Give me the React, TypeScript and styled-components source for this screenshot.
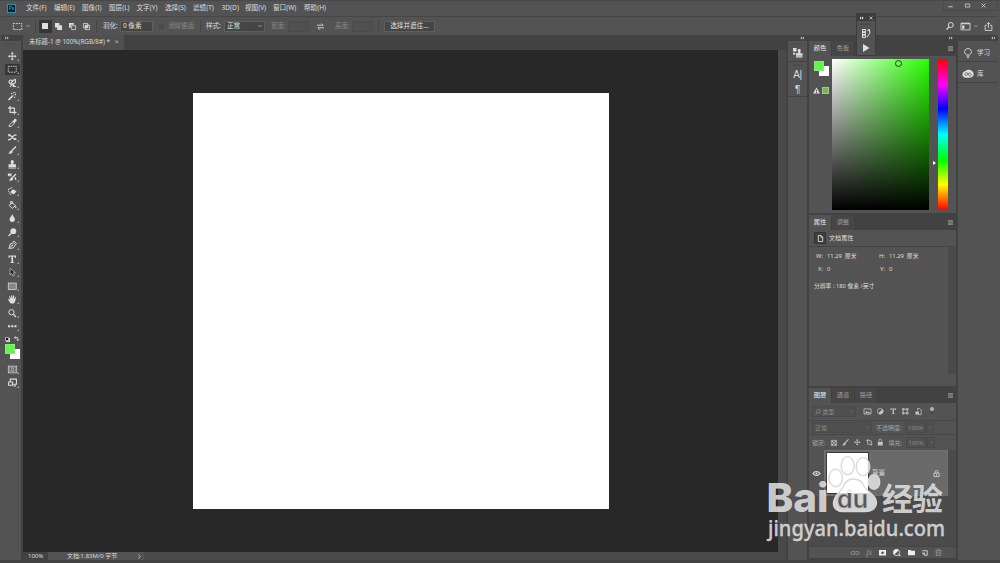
import React from 'react';
import styled, { createGlobalStyle } from 'styled-components';

const GlobalStyle = createGlobalStyle`
  *, *::before, *::after {
    box-sizing: border-box;
  }
  body {
    margin: 0;
    background: #535353;
    overflow: hidden;
    font-family: "Noto Sans", "Noto Sans CJK SC", sans-serif;
    font-size: 6.6px;
    line-height: 10px;
    color: #dedede;
    white-space: nowrap;
  }
  svg {
    display: block;
    flex: none;
    overflow: visible;
  }
`;

const s = { fill: 'none', stroke: 'currentColor', strokeWidth: 1.8 };
const f = { fill: 'currentColor' };

const icons: Record<string, React.ReactNode> = {
  move: <><path {...s} d="M8 2v12M2 8h12" /><path {...f} d="M8 0l3 3.500H5zM8 16l-3-3.500h6zM0 8l3.500-3v6zM16 8l-3.500 3V5z" /></>,
  marquee: <rect {...s} strokeWidth={1.6} strokeDasharray="3 1.6" x="0.500" y="2.500" width="15" height="11" />,
  lasso: <><path {...s} strokeWidth={2} d="M4 9C-1 5 4 0 8 3l6-2v6l-5 3-3-4 4-2M3 8l4 3-3 4" /><path {...f} d="M8 8l8 7H9z" /></>,
  wand: <><path {...s} strokeWidth={3} d="M1 15L9 7" /><path {...s} strokeWidth={2.2} d="M10 6l1-1M11 0v2M15 5h-2M14 1l-1 1M6 2l2 2M12 9l1 2" /></>,
  crop: <path {...s} strokeWidth={2.2} d="M4 0v12h12M0 4h12v12" />,
  dropper: <><path {...s} d="M2 14l1-3 6-6 3 3-6 6z" /><path {...f} d="M8 4l2-1 2-3c3-1 5 1 4 4l-3 2-1 2z" /></>,
  patch: <path {...s} strokeWidth={2.6} d="M0 3l4 1 8 8h4M0 13l4-1 8-8h4M1 6l3-2M12 12l3-2" />,
  brush: <><path {...s} strokeWidth={2.6} d="M15 1L7 9" /><path {...f} d="M6 8l3 3c-1 4-5 4-8 4 2-2 1-5 5-7z" /></>,
  stamp: <path {...f} d="M5 3a3 3 0 0 1 6 0c0 2-1 3-1 5h5v5H1V8h5c0-2-1-3-1-5zM1 14h14v2H1z" />,
  history: <><path {...s} strokeWidth={2.4} d="M15 2L8 9M1 6V2h6M2 2l4 4M13 8l2 5" /><path {...f} d="M7 8l3 3c-1 4-5 4-8 4 2-2 1-5 5-7z" /></>,
  eraser: <><path {...f} d="M9 4l7 4-5 6-7-4z" /><path {...s} strokeWidth={2} strokeDasharray="2 1.500" d="M1 9V4l7-3M2 11l5 4" /></>,
  bucket: <><path {...s} d="M2 8l6-5 6 6-6 5zM5 6V1h3v5" /><path {...f} d="M14 8c3 4 2 6 1 6s-2-2-1-6z" /></>,
  drop: <path {...f} d="M8 0c1 4 5 6 5 10a5 5 0 0 1-10 0c0-4 4-6 5-10z" />,
  dodge: <><circle {...f} cx="10" cy="6" r="5.500" /><path {...s} strokeWidth={2.2} d="M7 9l-6 6" /></>,
  pen: <><path {...s} d="M2 14L4 6l6-3 4 4-4 6zM2 14l6-6M9 2l2-2 5 5-2 2" /><circle {...f} cx="8" cy="8" r="1.500" /></>,
  type: <path {...f} d="M1 1h14v4h-2L12 3H9.500v10l2 1v1h-7v-1l2-1V3H4L3 5H1z" />,
  arrow: <path fill="#171717" stroke="currentColor" strokeWidth="1.200" d="M4 1v12l3-3 2 5 3-1-2-5h4z" />,
  rect: <rect x="0.500" y="2" width="15" height="12" fill="#858585" stroke="currentColor" strokeWidth="1.400" />,
  hand: <path {...f} d="M5 16C3 13 1 10 0 8c1-1 2-1 4 1L2 3c1-1 2-1 2 0l2 4V1c1-1 2-1 2 0v6l2-6c1-1 2 0 2 1l-1 6 3-4c1 0 2 0 1 2-1 4-2 8-4 10z" />,
  zoom: <><circle {...s} cx="6.500" cy="6" r="5" /><path {...s} strokeWidth={2.4} d="M10 10l5 5" /></>,
  search: <><circle {...s} strokeWidth={2} cx="9.500" cy="6" r="5" /><path {...s} strokeWidth={2.2} d="M6 10l-5 5" /></>,
  more: <path {...f} d="M0 6h4v4H0zM6 6h4v4H6zM12 6h4v4h-4z" />,
  mask: <><rect {...s} strokeWidth={1.3} x="0.500" y="2" width="15" height="12" /><rect {...s} strokeWidth={1.3} strokeDasharray="1.500 1" x="3" y="4" width="10" height="8" /><circle {...s} strokeWidth={1.3} cx="8" cy="8" r="2.500" /></>,
  screen: <><path {...s} d="M4 9V2h11v9H9" /><path {...s} fill="#535353" d="M1 7h7v6H1zM10 14h4" /></>,
  chevron: <path {...s} strokeWidth={2.4} d="M2 5l6 6 6-6" />,
  next: <path {...s} strokeWidth={2} d="M5 1l5 7-5 7" />,
  collapse: <path {...f} d="M8 2v12L1 8zM16 2v12L9 8z" />,
  expand: <path {...f} d="M0 2v12l7-6zM8 2v12l7-6z" />,
  close: <path {...s} strokeWidth={2.8} d="M2 2l12 12M14 2L2 14" />,
  minimize: <path {...s} strokeWidth={3} d="M1 12h14" />,
  maximize: <path {...s} strokeWidth={2.6} d="M1 3h14v10H1z" />,
  swap: <path {...s} strokeWidth={2} d="M0 5h14l-4-4M16 11H2l4 4" />,
  switch: <path {...s} strokeWidth={2.6} d="M5 1L1 5l4 3M1 5h11v10M8 11l4 4 4-4" />,
  square: <path {...f} d="M2 2h12v12H2z" />,
  union: <path {...f} d="M0 0h10v5h6v11H5v-6H0z" />,
  subtract: <><path {...f} d="M0 0h11v4H4v7H0z" /><path {...s} d="M6 6h9v9H6z" /></>,
  intersect: <><path {...s} d="M1 1h10v10H1zM5 5h10v10H5z" /><path {...f} d="M5 5h6v6H5z" /></>,
  workspace: <><path {...s} strokeWidth={1.5} d="M0 2h16v12H0z" /><path {...f} d="M0 2h16v2H0zM2 6h4v6H2z" /></>,
  share: <path {...s} strokeWidth={1.5} d="M5 6H2v9h12V6h-3M8 11V1M5 4l3-3 3 3" />,
  menu: <path {...s} strokeWidth={2.4} d="M0 2h16M0 6h16M0 10h16M0 14h16" />,
  cloneSource: <path {...f} d="M0 0h6v6H0zM0 8h4v3H0zM8 4a2.500 2.500 0 0 1 5 0l-1 5h4v4H5V9h4zM5 14h11v2H5z" />,
  actions: <><path {...s} d="M1 1h5v4H1zM1 6h5v4H1zM1 11h5v4H1zM10 2h3c3 5-1 9-4 12" /><path {...f} d="M9 2l5-2v5z" /></>,
  play: <path {...f} d="M2 0l13 8-13 8z" />,
  bulb: <path {...s} strokeWidth={1.5} d="M5.500 11C0 7 3 1 8 1s8 6 2.500 10zM6 13h4M6.500 15.500h3" />,
  cloud: <><path {...f} d="M4 3c4-4 13-1 13 5 0 5-4 6-9 6C-3 15-3 4 4 3z" /><path fill="none" stroke="#535353" strokeWidth="1.300" d="M3 9c0-4 4-4 6 0s4 2 4 0-3-4-5-1-4 3-5 1" /></>,
  warning: <><path {...f} d="M8 1l8 14H0z" /><path d="M7 6h2v4H7zM7 11.500h2v2H7z" fill="#444" /></>,
  page: <path {...s} strokeWidth={2} d="M3 1h6l4 4v10H3zM9 1v4h4" />,
  image: <><path {...s} d="M0 2h16v12H0z" /><path {...f} d="M2 12l4-5 3 3 2-2 4 4z" /></>,
  adjust: <><circle {...s} cx="8" cy="8" r="7" /><path {...f} d="M3 13L13 3a7 7 0 0 1-10 10z" /></>,
  halfCircle: <><circle {...s} cx="8" cy="8" r="7" /><path {...f} d="M3 13L13 3a7 7 0 0 0-10 10z" /><path {...f} d="M13 13h4v3h-4z" /></>,
  shape: <path {...s} d="M3 3h10v10H3zM1 1h4v4H1zM11 1h4v4h-4zM1 11h4v4H1zM11 11h4v4h-4z" />,
  smart: <><path {...s} d="M6 6V1h5l3 3v11H8" /><path {...f} d="M1 8h8v7H1z" /></>,
  checker: <><path {...s} d="M1 1h14v14H1z" /><path {...f} d="M2 2h4v4H2zM10 2h4v4h-4zM6 6h4v4H6zM2 10h4v4H2zM10 10h4v4h-4z" /></>,
  artboard: <path {...s} d="M4 0v13h12M0 4h10M13 4v12M7 1l6 6" />,
  lock: <><path {...f} d="M2 7h12v9H2z" /><path {...s} d="M4.500 7V4a3.500 3.500 0 0 1 7 0v3" /></>,
  lockOutline: <path {...s} d="M2 7h12v8H2zM5 7V4a3 3 0 0 1 6 0v3M8 9v4" />,
  eye: <><path {...s} strokeWidth={2.6} d="M0 8c4-6 12-6 16 0-4 6-12 6-16 0z" /><circle {...f} cx="8" cy="8" r="2.500" /></>,
  link: <path {...s} d="M7 5H3a3 3 0 0 0 0 6h4M9 5h4a3 3 0 0 1 0 6H9M5 8h6" />,
  layerMask: <path {...f} fillRule="evenodd" d="M0 2h16v13H0zM8 5.500a3 3 0 1 0 .1 0z" />,
  folder: <path {...f} d="M0 2h6l2 2h8v10H0z" />,
  newLayer: <path {...s} strokeWidth={2} d="M1 2h13v12H7V8H1M7 14L1 8" />,
  trash: <path {...s} d="M1 4h14M5 4V1h6v3M3 4v11h10V4M6 7v5M10 7v5" />,
};

const Icon = ({ name, size = 8 }: { name: string; size?: number }) => (
  <svg width={size} height={size} viewBox="0 0 16 16">{icons[name]}</svg>
);

const Window = styled.div`
  position: relative;
  width: 1000px;
  height: 563px;
  padding: 0 2px 0 1px;
  display: flex;
  flex-direction: column;
  background: #535353;
  border-top: 1px solid #484848;
  border-bottom: 3px solid #434343;
  overflow: hidden;
`;

const MenuBar = styled.div`
  display: flex;
  align-items: center;
  height: 16px;
  padding: 0 0 1px 6px;
  border-bottom: 1px solid #464646;
`;

const Logo = styled.div`
  width: 9px;
  height: 9px;
  margin-right: 10px;
  border: 1px solid #2793ad;
  background: #06202e;
  color: #35b9df;
  font-size: 5px;
  line-height: 7px;
  text-align: center;
`;

const MenuItem = styled.span<{ $w: number }>`
  width: ${p => p.$w}px;
  font-size: 6.6px;
`;

const WindowButtons = styled.div`
  display: flex;
  align-items: center;
  justify-content: space-between;
  width: 55px;
  height: 10px;
  margin: -4px 0 0 auto;
  padding: 0 11px 1px 4px;
  border: 1px solid #494949;
  border-top: 0;
  color: #d0d0d0;
`;

const OptionsBar = styled.div`
  display: flex;
  align-items: center;
  height: 18px;
  padding-left: 12px;
`;

const Gap = styled.div<{ $w?: number; $h?: number }>`
  flex: none;
  width: ${p => p.$w || 1}px;
  height: ${p => p.$h || 1}px;
`;

const Divider = styled.div`
  flex: none;
  width: 1px;
  height: 13px;
  background: #464646;
`;

const Mode = styled.div<{ $on?: boolean }>`
  display: flex;
  align-items: center;
  justify-content: center;
  width: 13.6px;
  height: 13px;
  background: ${p => (p.$on ? '#373737' : 'none')};
`;

const Text = styled.span<{ $w?: number; $dim?: boolean }>`
  flex: none;
  width: ${p => (p.$w ? `${p.$w}px` : 'auto')};
  color: ${p => (p.$dim ? '#858585' : 'inherit')};
`;

const Field = styled.div<{ $w: number; $dim?: boolean }>`
  flex: none;
  display: flex;
  align-items: center;
  justify-content: space-between;
  width: ${p => p.$w}px;
  height: 11px;
  padding: 0 2px;
  border: 1px solid ${p => (p.$dim ? '#4a4a4a' : '#5e5e5e')};
  background: ${p => (p.$dim ? '#505050' : '#454545')};
  color: ${p => (p.$dim ? '#8c8c8c' : '#e4e4e4')};
`;

const Checkbox = styled.div`
  width: 5px;
  height: 5px;
  margin-right: 4px;
  background: #4a4a4a;
`;

const Workspace = styled.div`
  flex: 1;
  display: flex;
  gap: 2px;
  min-height: 0;
  background: #424242;
`;

const Dock = styled.div<{ $w: number }>`
  flex: none;
  display: flex;
  flex-direction: column;
  width: ${p => p.$w}px;
  background: #535353;
`;

const DockHeader = styled.div<{ $left?: boolean }>`
  display: flex;
  flex: none;
  align-items: center;
  justify-content: ${p => (p.$left ? 'flex-start' : 'flex-end')};
  height: 6px;
  padding: 0 3px 0 4px;
  background: #424242;
  color: #b8b8b8;
`;

const Grip = styled.div`
  flex: none;
  width: 10px;
  height: 2px;
  margin: 2px auto 0;
  background: repeating-linear-gradient(90deg, #464646 0 1px, #535353 1px 2px);
`;

const Tools = styled.div`
  display: flex;
  flex-direction: column;
  align-items: center;
  padding-top: 4px;
  padding-left: 2px;
`;

const Tool = styled.div<{ $on?: boolean }>`
  position: relative;
  display: flex;
  align-items: center;
  justify-content: center;
  width: 15px;
  height: 13.55px;
  background: ${p => (p.$on ? '#363636' : 'none')};
  background-clip: content-box;
  padding: 1px 0;
  &::after {
    content: '';
    position: absolute;
    right: 1px;
    bottom: 2px;
    border-left: 2px solid transparent;
    border-bottom: 2px solid #a8a8a8;
  }
`;

const MiniColors = styled.div`
  display: flex;
  justify-content: space-between;
  align-items: center;
  width: 14px;
  height: 7px;
  margin: 2px 0;
`;

const MiniSquares = styled.div`
  width: 4px;
  height: 4px;
  border: 1px solid #aaa;
  background: #111;
  box-shadow: 1px 1px 0 #ddd;
`;

const Swatch = styled.div`
  position: relative;
  width: 15px;
  height: 15px;
  &::before, &::after {
    content: '';
    position: absolute;
    width: 10px;
    height: 10px;
  }
  &::before {
    right: 0;
    bottom: 0;
    background: #fff;
  }
  &::after {
    top: 0;
    left: 0;
    background: #63f44f;
    border: 1px solid #86ee7a;
  }
`;

const Document = styled.div`
  flex: none;
  display: flex;
  flex-direction: column;
  width: 763px;
`;

const TabStrip = styled.div`
  flex: none;
  height: 15px;
  background: #424242;
`;

const FileTab = styled.div`
  display: flex;
  align-items: center;
  justify-content: space-between;
  width: 101px;
  height: 15px;
  padding: 0 6px 1px;
  background: #505050;
  font-size: 6.3px;
`;

const View = styled.div`
  flex: 1;
  display: flex;
  min-height: 0;
  background: #4a4a4a;
`;

const Canvas = styled.div`
  width: 755px;
  padding: 43px 0 0 169.5px;
  background: #282828;
`;

const Artboard = styled.div`
  width: 416px;
  height: 416px;
  background: #fff;
`;

const StatusBar = styled.div`
  display: flex;
  align-items: center;
  height: 8px;
  background: #4a4a4a;
  font-size: 6px;
  line-height: 8px;
`;

const Zoom = styled.div`
  width: 25px;
  padding-left: 5px;
  background: #424242;
`;

const DocSize = styled.div`
  display: flex;
  align-items: center;
  justify-content: space-between;
  width: 96px;
  padding: 0 2px 0 19px;
  background: #535353;
`;

const IconGroup = styled.div<{ $h: number }>`
  flex: none;
  display: flex;
  flex-direction: column;
  align-items: center;
  height: ${p => p.$h}px;
  border-bottom: 1px solid #434343;
`;

const IconSlot = styled.div<{ $h?: number }>`
  display: flex;
  align-items: center;
  height: ${p => p.$h || 16}px;
  font: 10px "Liberation Sans", sans-serif;
  letter-spacing: -0.5px;
`;

const Panel = styled.section<{ $h: number }>`
  flex: none;
  display: flex;
  flex-direction: column;
  height: ${p => p.$h}px;
  border-bottom: 2px solid #424242;
`;

const Tabs = styled.div`
  flex: none;
  display: flex;
  align-items: center;
  height: 15px;
  padding-right: 3px;
  background: #424242;
  color: #a2a2a2;
`;

const Tab = styled.div<{ $on?: boolean }>`
  width: 23px;
  height: 15px;
  line-height: 14px;
  font-size: 6.2px;
  text-align: center;
  border-right: 1px solid #3f3f3f;
  background: ${p => (p.$on ? '#535353' : '#464646')};
  color: ${p => (p.$on ? '#eee' : '#9e9e9e')};
`;

const Push = styled.div`
  flex: 1;
`;

const ColorBody = styled.div`
  display: flex;
  flex: 1;
  padding: 3px 8px 3px 5px;
`;

const ColorSide = styled.div`
  flex: none;
  width: 18px;
  padding-top: 2px;
`;

const Gamut = styled.div`
  display: flex;
  align-items: center;
  gap: 2px;
  margin: 11px 0 0 -1px;
  &::after {
    content: '';
    width: 7px;
    height: 7px;
    border: 1px solid #a9c494;
    background: #78b64d;
  }
`;

const ColorField = styled.div`
  position: relative;
  width: 97px;
  height: 151px;
  background: linear-gradient(0deg, #000, transparent), linear-gradient(90deg, #fff, #29ff00);
`;

const Picker = styled.div`
  position: absolute;
  left: 63px;
  top: 1px;
  width: 7px;
  height: 7px;
  border: 1px solid #174d0c;
  border-radius: 50%;
`;

const HueBar = styled.div`
  position: relative;
  width: 10px;
  height: 151px;
  margin-left: 9px;
  background: linear-gradient(#f00, #f0f 17%, #00f 33%, #0ff 50%, #0f0 67%, #ff0 83%, #f00);
  &::before {
    content: '';
    position: absolute;
    left: -5px;
    top: 102px;
    border-left: 3px solid #fff;
    border-top: 2px solid transparent;
    border-bottom: 2px solid transparent;
  }
`;

const PropHeader = styled.div`
  display: flex;
  align-items: center;
  gap: 3px;
  height: 17px;
  padding-left: 5px;
  border-bottom: 1px solid #454545;
  font-size: 6.1px;
`;

const PageBox = styled.div`
  padding: 1.5px;
  border: 1px solid #353535;
  background: #3e3e3e;
`;

const PropBody = styled.div`
  flex: 1;
  display: flex;
  justify-content: space-between;
`;

const PropList = styled.div`
  padding: 4px 0 0 5px;
  font-size: 5.8px;
`;

const PropRow = styled.div`
  display: flex;
  height: 12.5px;
  & + & + & {
    margin-top: 5px;
  }
`;

const ScrollTrack = styled.div`
  flex: none;
  width: 8px;
  background: #4a4a4a;
`;

const LayerRow = styled.div<{ $h: number; $line?: boolean }>`
  flex: none;
  display: flex;
  align-items: center;
  height: ${p => p.$h}px;
  padding-left: 3px;
  color: #a6a6a6;
  font-size: 6px;
  border-bottom: ${p => (p.$line ? '1px solid #474747' : 'none')};
`;

const LayerIcons = styled.div<{ $gap: number }>`
  display: flex;
  align-items: center;
  gap: ${p => p.$gap}px;
  color: #c4c4c4;
`;

const Toggle = styled.div`
  width: 4px;
  height: 4px;
  margin: -5px 0 0 8px;
  border-radius: 50%;
  background: #b2b2b2;
  box-shadow: 0 4px 0 -1px #414141;
`;

const LayerList = styled.div`
  flex: 1;
  display: flex;
  background: #4b4b4b;
`;

const EyeColumn = styled.div`
  width: 15px;
  height: 46px;
  padding: 20px 4px 0;
  background: #535353;
`;

const Layer = styled.div`
  display: flex;
  align-items: center;
  width: 124px;
  height: 46px;
  padding: 0 7px 0 1px;
  background: #6a6a6a;
  border: 1px solid #707070;
`;

const Thumb = styled.div`
  width: 43px;
  height: 42px;
  margin-right: 3px;
  border: 1px solid #3a3a3a;
  background: #fff;
`;

const LayerFooter = styled.div`
  flex: none;
  display: flex;
  align-items: center;
  justify-content: space-between;
  height: 12px;
  padding: 0 14px 0 42px;
  color: #ececec;
  border-top: 1px solid #454545;
  background: #535353;
`;

const Faded = styled.span`
  opacity: 0.42;
  font: italic 8px "Liberation Serif", serif;
`;

const SideItem = styled.div`
  flex: none;
  display: flex;
  align-items: center;
  gap: 4px;
  height: 21px;
  padding: 3px 0 0 5px;
  border-bottom: 1px solid #434343;
`;

const FloatingPanel = styled.div`
  position: absolute;
  left: 856px;
  top: 12px;
  width: 20px;
  height: 43px;
  display: flex;
  flex-direction: column;
  align-items: center;
  background: #535353;
  border: 1px solid #3c3c3c;
`;

const FloatingHeader = styled.div`
  display: flex;
  align-items: center;
  justify-content: space-between;
  width: 18px;
  height: 7px;
  padding: 0 2px 0 3px;
  background: #3d3d3d;
`;

const Watermark = styled.div`
  position: absolute;
  left: 760px;
  top: 449px;
`;

const menus: [string, number][] = [
  ['文件(F)', 28], ['编辑(E)', 28], ['图像(I)', 27], ['图层(L)', 27.5], ['文字(Y)', 28.5],
  ['选择(S)', 28], ['滤镜(T)', 28.5], ['3D(D)', 23.5], ['视图(V)', 28], ['窗口(W)', 31], ['帮助(H)', 28],
];

const tools = [
  'move', 'marquee', 'lasso', 'wand', 'crop', 'dropper', 'patch', 'brush', 'stamp', 'history', 'eraser',
  'bucket', 'drop', 'dodge', 'pen', 'type', 'arrow', 'rect', 'hand', 'zoom', 'more',
];

const PanelTabs = ({ names }: { names: string[] }) => (
  <Tabs>
    {names.map((name, i) => <Tab key={name} $on={i === 0}>{name}</Tab>)}
    <Push />
    <Icon name="menu" size={5} />
  </Tabs>
);

const Options = () => (
  <OptionsBar>
    <Icon name="marquee" size={9} />
    <Gap $w={4} />
    <Icon name="chevron" size={4} />
    <Gap $w={5} />
    <Divider />
    <Gap $w={2.5} />
    <Mode $on><Icon name="square" /></Mode>
    <Mode><Icon name="union" size={7} /></Mode>
    <Mode><Icon name="subtract" size={7} /></Mode>
    <Mode><Icon name="intersect" size={7} /></Mode>
    <Gap $w={3} />
    <Divider />
    <Gap $w={6} />
    <Text $w={17}>羽化:</Text>
    <Field $w={33}>0 像素</Field>
    <Gap $w={6} />
    <Checkbox />
    <Text $w={32} $dim>消除锯齿</Text>
    <Divider />
    <Gap $w={5} />
    <Text $w={18}>样式:</Text>
    <Field $w={41}><Text>正常</Text><Icon name="chevron" size={4} /></Field>
    <Gap $w={6} />
    <Text $w={17} $dim>宽度:</Text>
    <Field $w={21} $dim />
    <Gap $w={8} />
    <Icon name="swap" size={7} />
    <Gap $w={11} />
    <Text $w={17} $dim>高度:</Text>
    <Field $w={21} $dim />
    <Gap $w={5} />
    <Divider />
    <Gap $w={5} />
    <Field $w={51}><Gap $w={2} />选择并遮住...<Gap $w={2} /></Field>
    <Push />
    <Icon name="search" />
    <Gap $w={7} />
    <Icon name="workspace" size={9} />
    <Gap $w={4} />
    <Icon name="chevron" size={4} />
    <Gap $w={6} />
    <Icon name="share" size={9} />
    <Gap $w={5} />
  </OptionsBar>
);

const Toolbox = () => (
  <Dock $w={20}>
    <DockHeader $left><Icon name="expand" size={4} /></DockHeader>
    <Grip />
    <Tools>
      {tools.map(name => (
        <Tool key={name} $on={name === 'marquee'}><Icon name={name} size={8.5} /></Tool>
      ))}
      <MiniColors><MiniSquares /><Icon name="switch" size={5} /></MiniColors>
      <Swatch />
      <Gap $h={3} />
      <Tool><Icon name="mask" size={9} /></Tool>
      <Tool><Icon name="screen" size={9} /></Tool>
    </Tools>
  </Dock>
);

const ColorPanel = () => (
  <Panel $h={174}>
    <PanelTabs names={['颜色', '色板']} />
    <ColorBody>
      <ColorSide>
        <Swatch />
        <Gamut><Icon name="warning" size={7} /></Gamut>
      </ColorSide>
      <ColorField><Picker /></ColorField>
      <HueBar />
    </ColorBody>
  </Panel>
);

const PropertiesPanel = () => (
  <Panel $h={173}>
    <PanelTabs names={['属性', '调整']} />
    <PropHeader>
      <PageBox><Icon name="page" size={7} /></PageBox>
      文档属性
    </PropHeader>
    <PropBody>
      <PropList>
        <PropRow><Gap $w={2} /><Text $w={11}>W:</Text><Text $w={52}>11.29&nbsp; 厘米</Text><Text $w={10}>H:</Text><Text>11.29&nbsp; 厘米</Text></PropRow>
        <PropRow><Gap $w={4} /><Text $w={9}>X:</Text><Text $w={53}>0</Text><Text $w={9}>Y:</Text><Text>0</Text></PropRow>
        <PropRow><Text>分辨率 : 180 像素 /英寸</Text></PropRow>
      </PropList>
      <ScrollTrack />
    </PropBody>
    <Gap $h={12} />
  </Panel>
);

const LayersPanel = () => (
  <Panel $h={172}>
    <PanelTabs names={['图层', '通道', '路径']} />
    <LayerRow $h={18} $line>
      <Field $w={44} $dim><Icon name="search" size={6} /><Text>&nbsp;类型</Text><Push /><Icon name="chevron" size={3} /></Field>
      <Gap $w={8} />
      <LayerIcons $gap={6}>
        <Icon name="image" size={7} />
        <Icon name="adjust" size={6.5} />
        <Icon name="type" size={6.5} />
        <Icon name="shape" size={6.5} />
        <Icon name="smart" size={7} />
      </LayerIcons>
      <Toggle />
    </LayerRow>
    <LayerRow $h={14} $line>
      <Field $w={60} $dim>正常<Icon name="chevron" size={3} /></Field>
      <Gap $w={4} />
      <Text $w={29}>不透明度:</Text>
      <Field $w={21} $dim>100%</Field>
      <Field $w={8} $dim><Icon name="chevron" size={3} /></Field>
    </LayerRow>
    <LayerRow $h={15}>
      <Text $w={19}>锁定:</Text>
      <LayerIcons $gap={5}>
        <Icon name="checker" size={6} />
        <Icon name="brush" size={7} />
        <Icon name="move" size={6.5} />
        <Icon name="artboard" size={6.5} />
        <Icon name="lock" size={6.5} />
      </LayerIcons>
      <Gap $w={5} />
      <Text $w={17}>填充:</Text>
      <Field $w={21} $dim>100%</Field>
      <Field $w={8} $dim><Icon name="chevron" size={3} /></Field>
    </LayerRow>
    <LayerList>
      <EyeColumn><Icon name="eye" size={7} /></EyeColumn>
      <Layer><Thumb />背景<Push /><Icon name="lockOutline" size={7} /></Layer>
    </LayerList>
    <LayerFooter>
      <Faded><Icon name="link" /></Faded>
      <Faded>fx</Faded>
      <Icon name="layerMask" size={7} />
      <Icon name="halfCircle" size={7} />
      <Icon name="folder" size={7} />
      <Icon name="newLayer" size={6} />
      <Faded><Icon name="trash" size={7} /></Faded>
    </LayerFooter>
  </Panel>
);

const Brand = () => (
  <Watermark>
    <svg width="200" height="100" viewBox="0 0 200 100" fill="#dedede" fillOpacity="0.9">
      <defs>
        <linearGradient id="pad" gradientUnits="userSpaceOnUse" x1="0" y1="28" x2="0" y2="62">
          <stop offset="0.44" stopColor="#fff" />
          <stop offset="0.44" stopColor="#d4d4d4" />
        </linearGradient>
        <linearGradient id="ink" gradientUnits="userSpaceOnUse" x1="0" y1="28" x2="0" y2="62">
          <stop offset="0.44" stopColor="#fff" />
          <stop offset="0.44" stopColor="#555" />
        </linearGradient>
        <linearGradient id="toe">
          <stop offset="0.86" stopColor="#fff" />
          <stop offset="0.86" stopColor="#d4d4d4" />
        </linearGradient>
      </defs>
      <g stroke="#d8d8d8" strokeWidth="1.3">
        <ellipse cx="75.700" cy="28" rx="6.800" ry="8.800" fill="#fff" />
        <ellipse cx="87.700" cy="15.700" rx="6.500" ry="9" fill="#fff" />
        <ellipse cx="103" cy="16.700" rx="6.800" ry="9" fill="url(#toe)" />
        <ellipse cx="114" cy="32" rx="5.800" ry="7.300" />
        <path fill="url(#pad)" fillOpacity="1" d="M93 29c6 0 9 2 11 7 3 6 13 9 12.500 17-.5 6-5.500 9-12.500 8.500H86c-8 1-13-3-12.500-9C74 45 80 43 83 37c2-5 5-8 10-8z" />
      </g>
      <text x="6.500" y="61.700" fontFamily="Inter" fontWeight="800" fontSize="40" textLength="62" lengthAdjust="spacingAndGlyphs">Bai</text>
      <text x="77" y="58" fill="url(#ink)" fillOpacity="1" stroke="#bdbdbd" strokeWidth="0.400" fontFamily="Inter" fontWeight="600" fontSize="24.500" textLength="31" lengthAdjust="spacingAndGlyphs">du</text>
      <text x="122" y="59.500" fontFamily="Noto Sans CJK SC" fontWeight="700" fontSize="31" textLength="61">经验</text>
      <text x="8" y="85.500" stroke="#dedede" strokeWidth="0.300" fontFamily="Noto Sans" fontWeight="500" fontSize="21" textLength="177" lengthAdjust="spacingAndGlyphs">jingyan.baidu.com</text>
    </svg>
  </Watermark>
);

const App = () => (
  <>
    <GlobalStyle />
    <Window>
      <MenuBar>
        <Logo>Ps</Logo>
        {menus.map(([name, w]) => <MenuItem key={name} $w={w}>{name}</MenuItem>)}
        <WindowButtons>
          <Icon name="minimize" size={5} />
          <Icon name="maximize" size={5} />
          <Icon name="close" size={5} />
        </WindowButtons>
      </MenuBar>
      <Options />
      <Workspace>
        <Toolbox />
        <Document>
          <TabStrip>
            <FileTab>未标题-1 @ 100%(RGB/8#) * <Icon name="close" size={3.5} /></FileTab>
          </TabStrip>
          <View>
            <Canvas><Artboard /></Canvas>
          </View>
          <StatusBar>
            <Zoom>100%</Zoom>
            <DocSize>文档:1.83M/0 字节 <Icon name="next" size={5} /></DocSize>
          </StatusBar>
        </Document>
        <Dock $w={19}>
          <DockHeader><Icon name="collapse" size={4} /></DockHeader>
          <IconGroup $h={21}><Grip /><IconSlot><Icon name="cloneSource" size={9.5} /></IconSlot></IconGroup>
          <IconGroup $h={35}><Grip /><IconSlot $h={16}>A|</IconSlot><IconSlot $h={14}>¶</IconSlot></IconGroup>
        </Dock>
        <Dock $w={147}>
          <DockHeader><Icon name="expand" size={4} /></DockHeader>
          <ColorPanel />
          <PropertiesPanel />
          <LayersPanel />
        </Dock>
        <Dock $w={40}>
          <DockHeader><Icon name="collapse" size={4} /></DockHeader>
          <SideItem><Icon name="bulb" size={10} />学习</SideItem>
          <SideItem><Icon name="cloud" size={10} />库</SideItem>
        </Dock>
      </Workspace>
      <FloatingPanel>
        <FloatingHeader><Icon name="expand" size={4} /><Icon name="close" size={4} /></FloatingHeader>
        <Grip />
        <IconSlot><Icon name="actions" size={9} /></IconSlot>
        <IconSlot $h={14}><Icon name="play" size={8} /></IconSlot>
      </FloatingPanel>
      <Brand />
    </Window>
  </>
);

export default App;
